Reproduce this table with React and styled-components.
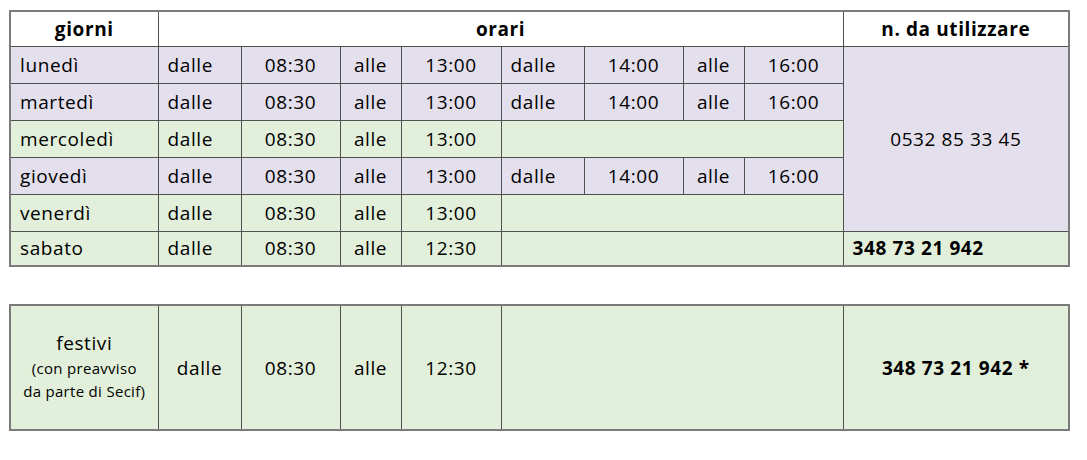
import styled, { createGlobalStyle } from 'styled-components';

const GlobalStyle = createGlobalStyle`
  body {
    margin: 0;
    background: #fff;
    font-family: "Open Sans", "Liberation Sans", sans-serif;
    color: #000;
  }
`;

const Page = styled.div`
  display: flex;
  flex-direction: column;
  gap: 37px;
  padding: 10px 0 0 9px;
`;

const Table = styled.table`
  width: 1059px;
  table-layout: fixed;
  border-collapse: collapse;
  border: 2px solid #7b7b7b;
  font-size: 19px;
  letter-spacing: 0.6px;
`;

const Row = styled.tr`
  height: ${({ $h }) => $h || 36}px;
  background: ${({ $tone }) =>
    $tone === 'lilac' ? '#e4dfec' : $tone === 'green' ? '#e2efda' : '#fff'};
`;

const Head = styled.th`
  border: 1px solid #505050;
  font-weight: 700;
  text-align: center;
  padding: 0;
`;

const Cell = styled.td`
  border: 1px solid #505050;
  padding: 0 ${({ $align }) => ($align === 'left' ? '9px' : '0')};
  text-align: ${({ $align }) => $align || 'center'};
  font-weight: ${({ $bold }) => ($bold ? 700 : 400)};
  background: ${({ $bg }) => $bg || 'transparent'};
  white-space: nowrap;
  vertical-align: middle;
`;

const Sub = styled.span`
  display: block;
  font-size: 15px;
  letter-spacing: 0.3px;
  line-height: 23px;
`;

const Title = styled.span`
  display: block;
  line-height: 28px;
  margin-top: -4px;
`;

const widths = [148, 83, 99, 61, 100, 83, 99, 61, 99, 226];

const Cols = () => (
  <colgroup>
    {widths.map((w, i) => (
      <col key={i} style={{ width: w }} />
    ))}
  </colgroup>
);

const days = [
  { name: 'lunedì', tone: 'lilac', end: '13:00', pm: true },
  { name: 'martedì', tone: 'lilac', end: '13:00', pm: true },
  { name: 'mercoledì', tone: 'green', end: '13:00' },
  { name: 'giovedì', tone: 'lilac', end: '13:00', pm: true },
  { name: 'venerdì', tone: 'green', end: '13:00' },
];

export default function App() {
  return (
    <>
      <GlobalStyle />
      <Page>
        <Table>
          <Cols />
          <tbody>
            <Row $h={35}>
              <Head>giorni</Head>
              <Head colSpan={8}>orari</Head>
              <Head>n. da utilizzare</Head>
            </Row>
            {days.map((d, i) => (
              <Row key={d.name} $tone={d.tone} $h={37}>
                <Cell $align="left">{d.name}</Cell>
                <Cell $align="left">dalle</Cell>
                <Cell>08:30</Cell>
                <Cell>alle</Cell>
                <Cell>{d.end}</Cell>
                {d.pm ? (
                  <>
                    <Cell $align="left">dalle</Cell>
                    <Cell>14:00</Cell>
                    <Cell>alle</Cell>
                    <Cell>16:00</Cell>
                  </>
                ) : (
                  <Cell colSpan={4} />
                )}
                {i === 0 && (
                  <Cell rowSpan={5} $bg="#e4dfec">
                    0532 85 33 45
                  </Cell>
                )}
              </Row>
            ))}
            <Row $tone="green" $h={35}>
              <Cell $align="left">sabato</Cell>
              <Cell $align="left">dalle</Cell>
              <Cell>08:30</Cell>
              <Cell>alle</Cell>
              <Cell>12:30</Cell>
              <Cell colSpan={4} />
              <Cell $align="left" $bold>
                348 73 21 942
              </Cell>
            </Row>
          </tbody>
        </Table>

        <Table>
          <Cols />
          <tbody>
            <Row $tone="green" $h={125}>
              <Cell>
                <Title>festivi</Title>
                <Sub>(con preavviso</Sub>
                <Sub>da parte di Secif)</Sub>
              </Cell>
              <Cell>dalle</Cell>
              <Cell>08:30</Cell>
              <Cell>alle</Cell>
              <Cell>12:30</Cell>
              <Cell colSpan={4} />
              <Cell $bold>348 73 21 942 *</Cell>
            </Row>
          </tbody>
        </Table>
      </Page>
    </>
  );
}
